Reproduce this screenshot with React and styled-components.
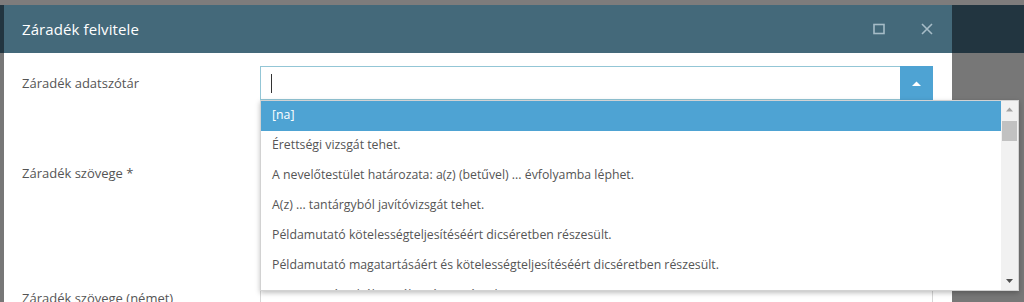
import styled, { createGlobalStyle } from 'styled-components';

const GlobalStyle = createGlobalStyle`
    body {
        margin: 0;
        font-family: "Open Sans", "Liberation Sans", sans-serif;
        overflow: hidden;
    }
`

const Page = styled.div`
    position: relative;
    width: 1024px;
    height: 302px;
    background: #777777;
    overflow: hidden;
`

const TopStrip = styled.div`
    height: 5px;
    background: #7e7c7c;
`

const Navbar = styled.div`
    height: 48px;
    background: #223540;
`

const Dialog = styled.div`
    position: absolute;
    left: 4px;
    top: 5px;
    width: 948px;
    height: 320px;
    background: #fff;
`

const DialogHeader = styled.div`
    height: 48px;
    background: #44697a;
    display: flex;
    align-items: center;
    padding: 0 19px 0 18px;
    color: #fff;
`

const Title = styled.div`
    flex: 1;
    font-size: 15px;
    letter-spacing: 0.1px;
`

const HeaderButton = styled.button`
    border: 0;
    background: none;
    padding: 0;
    width: 12px;
    height: 12px;
    margin-left: ${p => p.$gap}px;
    display: flex;
    color: #a6bcc7;
`

const DialogBody = styled.div`
    padding: 13px 19px 0 18px;
`

const FormRow = styled.div`
    display: grid;
    grid-template-columns: 238px 1fr;
    margin-top: ${p => p.$top || 0}px;
`

const Label = styled.label`
    font-size: 13px;
    color: #555;
    line-height: 34px;
    font-weight: 500;
`

const Field = styled.div`
    position: relative;
    display: flex;
    height: ${p => p.$height || 34}px;
    border: 1px solid ${p => p.$focused ? '#93c6d6' : '#d6d6d6'};
    box-sizing: border-box;
`

const Input = styled.div`
    flex: 1;
    display: flex;
    align-items: center;
    padding-left: 10px;
`

const Caret = styled.span`
    width: 1px;
    height: 19px;
    background: #333;
`

const ToggleButton = styled.div`
    width: 33px;
    margin: -1px -1px -1px 0;
    background: #4ea3d3;
    display: flex;
    align-items: center;
    justify-content: center;
`

const Dropdown = styled.div`
    position: absolute;
    left: -1px;
    top: 33px;
    width: 759px;
    height: 191px;
    box-sizing: border-box;
    border: 1px solid #d2d2d2;
    background: #fff;
    box-shadow: 0 2px 5px rgba(0, 0, 0, 0.25);
    display: flex;
    z-index: 5;
`

const OptionList = styled.ul`
    flex: 1;
    margin: 0;
    padding: 0;
    list-style: none;
    overflow: hidden;
`

const Option = styled.li`
    height: 30px;
    line-height: 28px;
    padding-left: 11px;
    font-size: 12.3px;
    color: ${p => p.$active ? '#fff' : '#555'};
    background: ${p => p.$active ? '#4ea3d3' : 'transparent'};
    white-space: nowrap;
`

const Scrollbar = styled.div`
    width: 17px;
    background: #f1f1f1;
    display: flex;
    flex-direction: column;
    align-items: center;
`

const ScrollArrow = styled.div`
    height: 17px;
    width: 100%;
    display: flex;
    align-items: center;
    justify-content: center;
    color: ${p => p.$dark ? '#505050' : '#a3a3a3'};
`

const Thumb = styled.div`
    width: 15px;
    height: 20px;
    margin-top: 3px;
    background: #c1c1c1;
`

const Track = styled.div`
    flex: 1;
`

const options = [
    '[na]',
    'Érettségi vizsgát tehet.',
    'A nevelőtestület határozata: a(z) (betűvel) ... évfolyamba léphet.',
    'A(z) ... tantárgyból javítóvizsgát tehet.',
    'Példamutató kötelességteljesítéséért dicséretben részesült.',
    'Példamutató magatartásáért és kötelességteljesítéséért dicséretben részesült.',
    'A(z) ... tantárgyból osztályozó vizsgát tehet.',
]

function Triangle({ up, size = 7 }) {
    return (
        <svg width={size} height={size / 2 + 1} viewBox="0 0 8 5">
            {up
                ? <polygon points="0,5 4,0.5 8,5" fill="currentColor" />
                : <polygon points="0,0 8,0 4,4.5" fill="currentColor" />}
        </svg>
    )
}

function App() {
    return (
        <Page>
            <GlobalStyle />
            <TopStrip />
            <Navbar />
            <Dialog>
                <DialogHeader>
                    <Title>Záradék felvitele</Title>
                    <HeaderButton $gap={0}>
                        <svg width="12" height="12" viewBox="0 0 12 12">
                            <rect x="1" y="1.5" width="10" height="9" fill="none" stroke="currentColor" strokeWidth="1.6" />
                        </svg>
                    </HeaderButton>
                    <HeaderButton $gap={36}>
                        <svg width="12" height="12" viewBox="0 0 12 12">
                            <path d="M1 1 L11 11 M11 1 L1 11" stroke="currentColor" strokeWidth="1.6" />
                        </svg>
                    </HeaderButton>
                </DialogHeader>
                <DialogBody>
                    <FormRow>
                        <Label>Záradék adatszótár</Label>
                        <Field $focused>
                            <Input><Caret /></Input>
                            <ToggleButton>
                                <svg width="9" height="5" viewBox="0 0 9 5">
                                    <polygon points="0,5 4.5,0.5 9,5" fill="#fff" />
                                </svg>
                            </ToggleButton>
                            <Dropdown>
                                <OptionList>
                                    {options.map((o, i) => (
                                        <Option key={i} $active={i === 0}>{o}</Option>
                                    ))}
                                </OptionList>
                                <Scrollbar>
                                    <ScrollArrow><Triangle up /></ScrollArrow>
                                    <Thumb />
                                    <Track />
                                    <ScrollArrow $dark><Triangle /></ScrollArrow>
                                </Scrollbar>
                            </Dropdown>
                        </Field>
                    </FormRow>
                    <FormRow $top={56}>
                        <Label>Záradék szövege *</Label>
                        <Field $height={110} />
                    </FormRow>
                    <FormRow $top={15}>
                        <Label>Záradék szövege (német)</Label>
                        <Field $height={110} />
                    </FormRow>
                </DialogBody>
            </Dialog>
        </Page>
    );
}

export default App;
